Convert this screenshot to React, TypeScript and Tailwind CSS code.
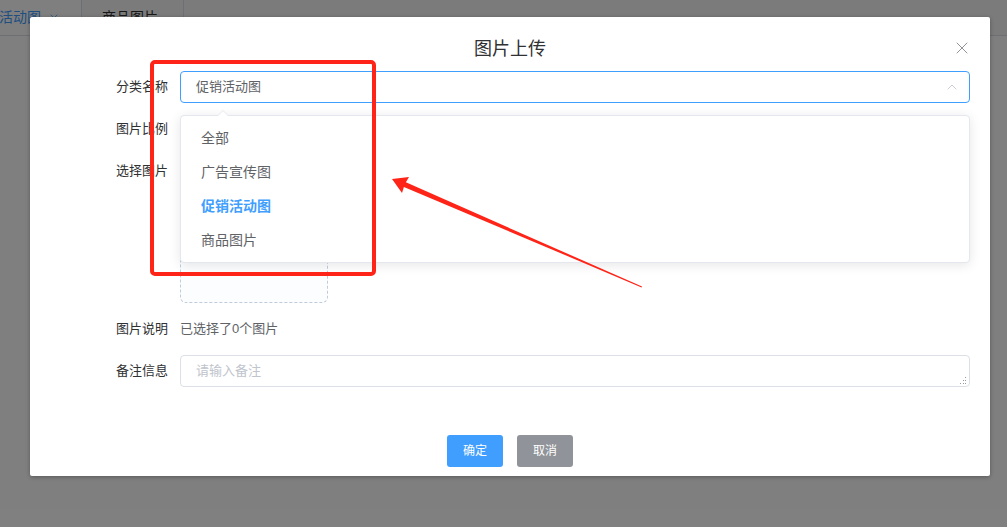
import { X, ChevronUp, Plus } from "lucide-react";

const font = "font-['Liberation_Sans','Noto_Sans_CJK_SC',sans-serif]";

const categories = [
  { label: "全部", active: false },
  { label: "广告宣传图", active: false },
  { label: "促销活动图", active: true },
  { label: "商品图片", active: false },
];

const FormRow = ({
  label,
  children,
  className = "",
}: {
  label: string;
  children: React.ReactNode;
  className?: string;
}) => (
  <div className={`flex ${className}`}>
    <label className="w-[100px] shrink-0 pr-3 text-right text-[13px] leading-8 text-[#303133]">{label}</label>
    <div className="relative flex-1">{children}</div>
  </div>
);

export default function App() {
  return (
    <div className={`relative h-[527px] w-full overflow-hidden bg-white ${font}`}>
      {/* page tabs behind the mask */}
      <div className="flex h-[36px] border-b border-[#dcdfe6] bg-[#f7f7f7]">
        <div className="-ml-[49px] flex h-[35px] items-center gap-[7px] border-r border-[#dcdfe6] bg-white pl-5 pr-[21px] text-[14px] text-[#409eff]">
          促销活动图
          <X className="h-3 w-3" strokeWidth={1.5} />
        </div>
        <div className="flex h-[35px] items-center border-r border-[#dcdfe6] pl-5 pr-[25px] text-[14px] text-[#303133]">
          商品图片
        </div>
      </div>

      {/* mask */}
      <div className="absolute inset-0 bg-black/50" />

      {/* dialog */}
      <div className="absolute left-[30px] top-[17px] w-[960px] rounded-[2px] bg-white shadow-[0_1px_4px_rgba(0,0,0,0.3)]">
        <div className="relative pt-5 text-center text-[18px] leading-6 text-[#303133]">
          图片上传
          <button className="absolute right-[18px] top-[21px] text-[#909399]">
            <X className="h-5 w-5" strokeWidth={1.2} />
          </button>
        </div>

        <div className="flex flex-col gap-[10px] pl-[50px] pr-5 pt-[10px]">
          <FormRow label="分类名称">
            <div className="flex h-8 items-center justify-between rounded border border-[#409eff] px-[15px] text-[13px] text-[#606266]">
              促销活动图
              <ChevronUp className="-mr-[6px] h-4 w-4 text-[#c0c4cc]" strokeWidth={1.25} />
            </div>
          </FormRow>

          <FormRow label="图片比例">
            <div className="flex h-8 items-center gap-[46px] pl-px">
              <span className="h-7 w-16 rounded border border-[#dcdfe6]" />
              <span className="h-7 w-16 rounded border border-[#dcdfe6]" />
              <span className="h-7 w-16 rounded border border-[#409eff] bg-[#409eff]" />
            </div>
          </FormRow>

          <FormRow label="选择图片">
            <div className="flex h-[148px] w-[148px] items-center justify-center rounded-md border border-dashed border-[#c0ccda] bg-[#fbfdff]">
              <Plus className="h-7 w-7 text-[#8c939d]" strokeWidth={1} />
            </div>
          </FormRow>

          <FormRow label="图片说明">
            <div className="text-[13px] leading-8 text-[#606266]">已选择了0个图片</div>
          </FormRow>

          <FormRow label="备注信息">
            <textarea
              rows={1}
              placeholder="请输入备注"
              className="block h-8 w-full resize-none rounded border border-[#dcdfe6] px-[15px] py-[5px] text-[13px] leading-5 text-[#606266] outline-none placeholder:text-[#c0c4cc]"
            />
            <svg className="absolute bottom-[2px] right-[3px]" width="8" height="8" viewBox="0 0 8 8" fill="#9a9a9a">
              <rect x="6" y="0" width="1" height="1" />
              <rect x="4" y="3" width="1" height="1" />
              <rect x="6" y="3" width="1" height="1" />
              <rect x="1" y="6" width="1" height="1" />
              <rect x="4" y="6" width="1" height="1" />
              <rect x="6" y="6" width="1" height="1" />
            </svg>
          </FormRow>
        </div>

        <div className="flex justify-center gap-[14px] pb-[9px] pt-12">
          <button className="h-8 w-14 rounded-[3px] bg-[#409eff] text-xs text-white">确定</button>
          <button className="h-8 w-14 rounded-[3px] bg-[#909399] text-xs text-white">取消</button>
        </div>
      </div>

      {/* select dropdown */}
      <div className="absolute left-[180px] top-[115px] w-[790px] rounded border border-[#e4e7ed] bg-white py-[5px] shadow-[0_2px_12px_rgba(0,0,0,0.1)]">
        <div className="absolute -top-[6px] left-[36px] h-0 w-0 border-x-[6px] border-b-[6px] border-x-transparent border-b-[#e4e7ed]" />
        <div className="absolute -top-[5px] left-[36px] h-0 w-0 border-x-[6px] border-b-[6px] border-x-transparent border-b-white" />
        {categories.map((c) => (
          <div
            key={c.label}
            className={`flex h-[34px] items-center px-5 text-[14px] ${
              c.active ? "font-bold text-[#409eff]" : "text-[#606266]"
            }`}
          >
            {c.label}
          </div>
        ))}
      </div>

      {/* annotation */}
      <svg className="pointer-events-none absolute left-0 top-0" width="1007" height="527">
        <rect x="152" y="62" width="222" height="212" rx="3" fill="none" stroke="#fe2418" strokeWidth="4" />
        <polygon
          points="392,179 409,177 405.9,182.3 642,286.6 641.6,287.4 403.9,186.9 402,193"
          fill="#fe2418"
        />
      </svg>
    </div>
  );
}
